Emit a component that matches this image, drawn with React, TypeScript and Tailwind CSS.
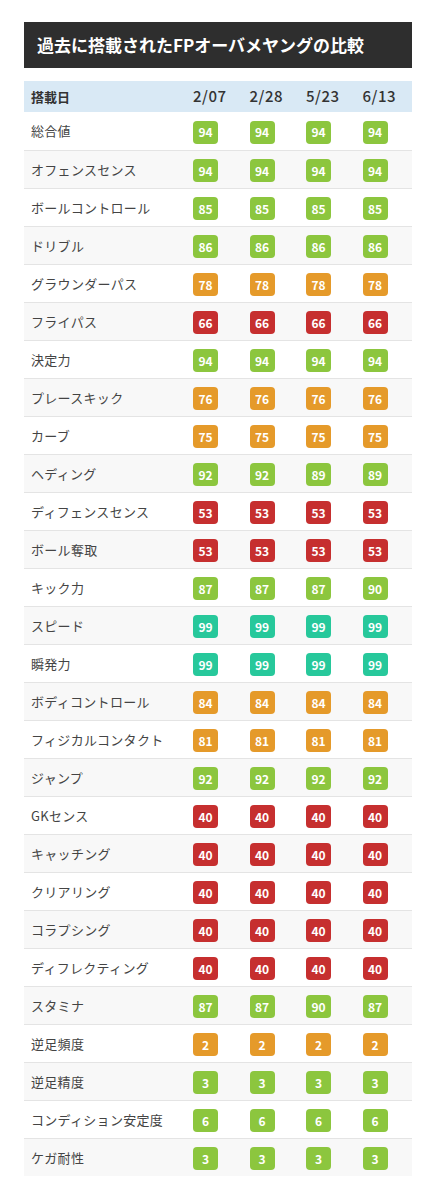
type Row = { label: string; values: number[] };

const rows: Row[] = [
  { label: "総合値", values: [94, 94, 94, 94] },
  { label: "オフェンスセンス", values: [94, 94, 94, 94] },
  { label: "ボールコントロール", values: [85, 85, 85, 85] },
  { label: "ドリブル", values: [86, 86, 86, 86] },
  { label: "グラウンダーパス", values: [78, 78, 78, 78] },
  { label: "フライパス", values: [66, 66, 66, 66] },
  { label: "決定力", values: [94, 94, 94, 94] },
  { label: "プレースキック", values: [76, 76, 76, 76] },
  { label: "カーブ", values: [75, 75, 75, 75] },
  { label: "ヘディング", values: [92, 92, 89, 89] },
  { label: "ディフェンスセンス", values: [53, 53, 53, 53] },
  { label: "ボール奪取", values: [53, 53, 53, 53] },
  { label: "キック力", values: [87, 87, 87, 90] },
  { label: "スピード", values: [99, 99, 99, 99] },
  { label: "瞬発力", values: [99, 99, 99, 99] },
  { label: "ボディコントロール", values: [84, 84, 84, 84] },
  { label: "フィジカルコンタクト", values: [81, 81, 81, 81] },
  { label: "ジャンプ", values: [92, 92, 92, 92] },
  { label: "GKセンス", values: [40, 40, 40, 40] },
  { label: "キャッチング", values: [40, 40, 40, 40] },
  { label: "クリアリング", values: [40, 40, 40, 40] },
  { label: "コラプシング", values: [40, 40, 40, 40] },
  { label: "ディフレクティング", values: [40, 40, 40, 40] },
  { label: "スタミナ", values: [87, 87, 90, 87] },
  { label: "逆足頻度", values: [2, 2, 2, 2] },
  { label: "逆足精度", values: [3, 3, 3, 3] },
  { label: "コンディション安定度", values: [6, 6, 6, 6] },
  { label: "ケガ耐性", values: [3, 3, 3, 3] },
];

const dates = ["2/07", "2/28", "5/23", "6/13"];

// small stats (逆足 / condition / injury) use their own scale
function badgeColor(label: string, v: number) {
  if (label === "逆足頻度") return "bg-[#e59a2a]";
  if (v < 10) return "bg-[#8cc63e]";
  if (v >= 95) return "bg-[#27c89b]";
  if (v >= 85) return "bg-[#8cc63e]";
  if (v >= 75) return "bg-[#e59a2a]";
  return "bg-[#c62f2f]";
}

function Badge({ label, value }: { label: string; value: number }) {
  return (
    <span
      className={`inline-flex h-[23px] w-[25px] items-center justify-center rounded-[4px] text-[12px] font-bold leading-none text-white ${badgeColor(label, value)}`}
    >
      {value}
    </span>
  );
}

export default function App() {
  return (
    <div
      className="min-h-[1200px] bg-white pl-[24px] pr-[26px] pt-[22px] text-[#333]"
      style={{ fontFamily: '"Noto Sans CJK JP", "Noto Sans", sans-serif' }}
    >
      <div className="flex h-[46px] items-center bg-[#2e2e2e] pl-[13px] text-[17px] font-bold text-white">
        過去に搭載されたFPオーバメヤングの比較
      </div>

      <div className="mt-[13px]">
        <div className="grid h-[31px] grid-cols-[162px_1fr_1fr_1fr_1fr] items-center bg-[#d9e9f5]">
          <div className="pl-[7px] text-[13px] font-bold">搭載日</div>
          {dates.map((d) => (
            <div key={d} className="pl-[7px] text-[15px] font-medium tracking-[0.5px]">
              {d}
            </div>
          ))}
        </div>

        {rows.map((row, i) => (
          <div
            key={row.label}
            className={`grid h-[38px] grid-cols-[162px_1fr_1fr_1fr_1fr] items-center ${i > 0 ? "border-t border-[#e4e4e4]" : ""} ${i % 2 === 1 ? "bg-[#f8f8f8]" : "bg-white"}`}
          >
            <div className="pl-[7px] text-[13px] tracking-[0.3px] text-[#444]">{row.label}</div>
            {row.values.map((v, j) => (
              <div key={j} className="pl-[7px]">
                <Badge label={row.label} value={v} />
              </div>
            ))}
          </div>
        ))}
      </div>
    </div>
  );
}
